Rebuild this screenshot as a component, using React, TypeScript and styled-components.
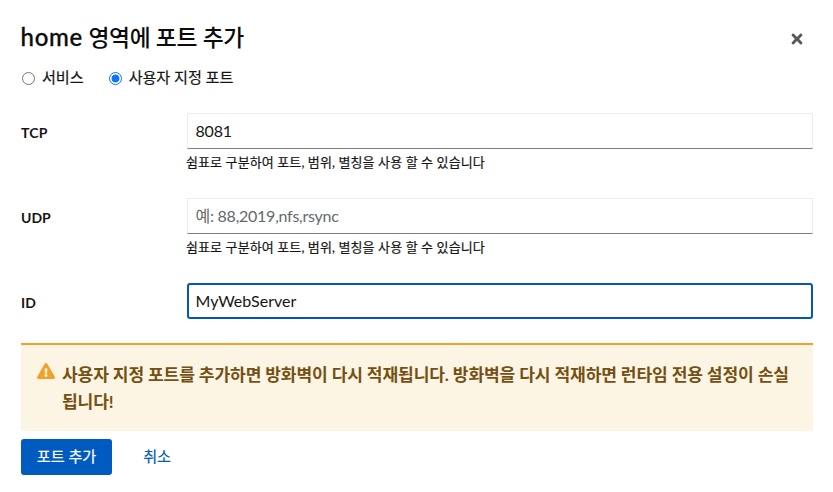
import React, { useState } from 'react';
import styled, { createGlobalStyle } from 'styled-components';
import { FaExclamationTriangle, FaTimes } from 'react-icons/fa';

const GlobalStyle = createGlobalStyle`
  *, *::before, *::after { box-sizing: border-box; }
  body {
    margin: 0;
    background: #fff;
    color: #151515;
    font-family: Lato, "Noto Sans CJK KR", sans-serif;
    font-size: 16px;
    line-height: 24px;
  }
  button, input { font: inherit; letter-spacing: inherit; }
`;

const Dialog = styled.section`
  display: flex;
  flex-direction: column;
  height: 492px;
  padding: 21px 20px 17px 21px;
`;

const Header = styled.header`
  display: flex;
  justify-content: space-between;
  height: 44px;
`;

const Title = styled.h1`
  margin: 0 0 0 -0.5px;
  color: #0c0c0c;
  font-size: 24px;
  font-weight: 500;
  line-height: 31px;
`;

const Latin = styled.span<{ $track?: number; $stroke?: number }>`
  letter-spacing: ${({ $track = 0 }) => $track}px;
  -webkit-text-stroke: ${({ $stroke = 0 }) => $stroke}px currentColor;
`;

const Hangul = styled.span<{ $size: number; $track?: number; $stroke?: number }>`
  font-size: ${({ $size }) => $size}px;
  letter-spacing: ${({ $track = 0 }) => $track}px;
  -webkit-text-stroke: ${({ $stroke = 0 }) => $stroke}px currentColor;
`;

const CloseButton = styled.button`
  display: flex;
  align-items: center;
  justify-content: center;
  width: 32px;
  height: 36px;
  padding: 0;
  border: 0;
  background: none;
  color: #56595d;
`;

const RadioRow = styled.div`
  display: flex;
  gap: 24px;
  height: 24px;
`;

const RadioLabel = styled.label`
  display: flex;
  align-items: center;
  gap: 7px;
`;

const Radio = styled.input`
  appearance: none;
  width: 13px;
  height: 13px;
  margin: 3px 0 0 1px;
  border: 1px solid #767676;
  border-radius: 50%;
  background: #fff;
  &:checked {
    border-color: #0a75ff;
    background: radial-gradient(circle, #0a75ff 3.6px, #fff 4.3px);
  }
`;

const Form = styled.form`
  display: flex;
  flex-direction: column;
  margin-top: 24px;
`;

const Field = styled.div<{ $height: number }>`
  display: grid;
  grid-template-columns: 150px 1fr;
  column-gap: 16px;
  align-items: start;
  height: ${({ $height }) => $height}px;
`;

const FieldLabel = styled.label`
  padding-top: 9px;
  font-size: 14px;
  font-weight: 700;
  line-height: 21px;
`;

const TextInput = styled.input<{ $track: number }>`
  display: block;
  width: 100%;
  height: 36px;
  padding: 0 7.5px 2px;
  border: 1px solid #ededed;
  border-bottom-color: #7d8083;
  border-radius: 0;
  outline: 0;
  background: #fff;
  color: #151515;
  letter-spacing: ${({ $track }) => $track}px;
  &::placeholder { color: #65686c; opacity: 1; }
`;

const FocusedInput = styled(TextInput)`
  padding: 0 6.5px 2px;
  border: 2px solid #0058bd;
  border-radius: 3px;
`;

const Helper = styled.div`
  margin: 3px 0 0 -1px;
  font-size: 13px;
  line-height: 21px;
`;

const Alert = styled.div`
  display: flex;
  height: 88px;
  padding: 17px 8px 0 16px;
  border-top: 2px solid #f4a02c;
  background: #fdf5e3;
  color: #755014;
`;

const AlertIcon = styled.span`
  display: flex;
  width: 25px;
  flex: none;
  color: #f4a02c;
`;

const AlertText = styled.p`
  margin: -1px 0 0;
  font-size: 17.1px;
  font-weight: 700;
  line-height: 27px;
`;

const Actions = styled.footer`
  display: flex;
  gap: 16px;
  margin-top: 8px;
`;

const Button = styled.button<{ $primary?: boolean }>`
  height: 36px;
  padding: 0 0 2px;
  width: ${({ $primary }) => ($primary ? 91 : 58)}px;
  border: 0;
  border-radius: 3px;
  background: ${({ $primary }) => ($primary ? '#005bc1' : 'transparent')};
  color: ${({ $primary }) => ($primary ? '#fff' : '#005bc1')};
`;

const helperText = '쉼표로 구분하여 포트, 범위, 별칭을 사용 할 수 있습니다';

export default function App() {
  const [mode, setMode] = useState('custom');
  return (
    <>
      <GlobalStyle />
      <Dialog role="dialog" aria-labelledby="title">
        <Header>
          <Title id="title">
            <Latin $track={0.7} $stroke={0.3}>home</Latin>
            <Hangul $size={22.8} $track={-0.3}>{' 영역에 포트 추가'}</Hangul>
          </Title>
          <CloseButton aria-label="닫기"><FaTimes size={16} /></CloseButton>
        </Header>
        <RadioRow>
          <RadioLabel>
            <Radio type="radio" name="mode" checked={mode === 'service'} onChange={() => setMode('service')} />
            <Hangul $size={15.2} $track={-0.1} $stroke={0.2}>서비스</Hangul>
          </RadioLabel>
          <RadioLabel>
            <Radio type="radio" name="mode" checked={mode === 'custom'} onChange={() => setMode('custom')} />
            <Hangul $size={15.2} $track={-0.1} $stroke={0.2}>사용자 지정 포트</Hangul>
          </RadioLabel>
        </RadioRow>
        <Form>
          <Field $height={85}>
            <FieldLabel htmlFor="tcp"><Latin $track={0.2}>TCP</Latin></FieldLabel>
            <div>
              <TextInput id="tcp" $track={-0.2} defaultValue="8081" />
              <Helper><Hangul $size={13} $track={0.1} $stroke={0.2}>{helperText}</Hangul></Helper>
            </div>
          </Field>
          <Field $height={85}>
            <FieldLabel htmlFor="udp"><Latin>UDP</Latin></FieldLabel>
            <div>
              <TextInput id="udp" $track={-0.25} placeholder="예: 88,2019,nfs,rsync" />
              <Helper><Hangul $size={13} $track={0.1} $stroke={0.2}>{helperText}</Hangul></Helper>
            </div>
          </Field>
          <Field $height={60}>
            <FieldLabel htmlFor="id"><Latin>ID</Latin></FieldLabel>
            <FocusedInput id="id" $track={0} defaultValue="MyWebServer" />
          </Field>
        </Form>
        <Alert role="alert">
          <AlertIcon><FaExclamationTriangle size={18} /></AlertIcon>
          <AlertText>
            <Hangul $size={17.1} $track={-0.13}>사용자 지정 포트를 추가하면 방화벽이 다시 적재됩니다. 방화벽을 다시 적재하면 런타임 전용 설정이 손실<br />됩니다!</Hangul>
          </AlertText>
        </Alert>
        <Actions>
          <Button $primary><Hangul $size={15.2} $track={-0.1} $stroke={0.2}>포트 추가</Hangul></Button>
          <Button><Hangul $size={15.2} $track={-0.1} $stroke={0.2}>취소</Hangul></Button>
        </Actions>
      </Dialog>
    </>
  );
}
